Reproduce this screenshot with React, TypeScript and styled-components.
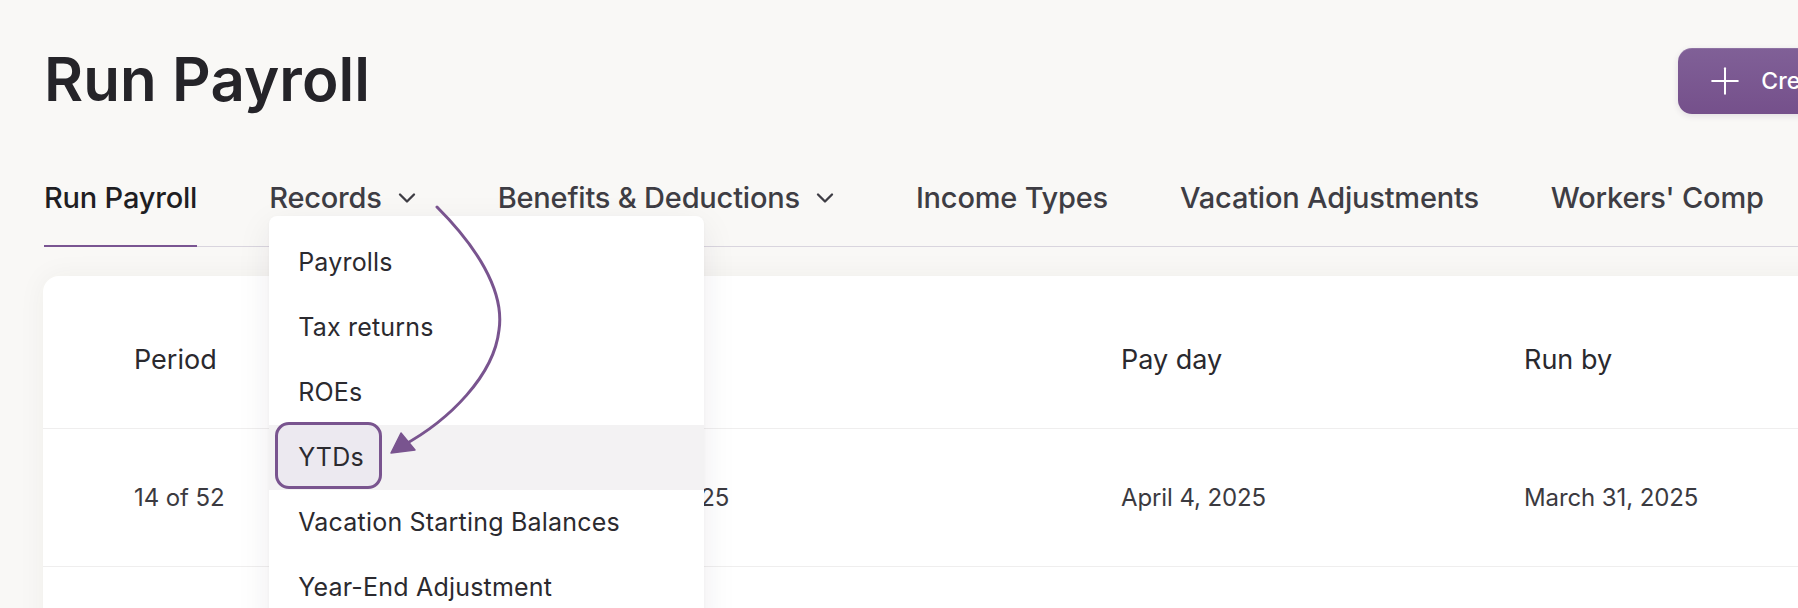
import { createGlobalStyle } from "styled-components";
import styled from "styled-components";
import { ChevronDown, Plus } from "lucide-react";

const GlobalStyle = createGlobalStyle`
  html, body {
    margin: 0;
    padding: 0;
    height: 608px;
    overflow: hidden;
    background: #f9f8f6;
    font-family: Inter, "Noto Sans", sans-serif;
    -webkit-font-smoothing: antialiased;
  }
`;

const Page = styled.div`
  position: relative;
  width: 1798px;
  height: 608px;
  overflow: hidden;
`;

const Inner = styled.div`
  width: 1905px;
  margin-left: 44px;
  padding-top: 48px;
`;

const Header = styled.div`
  display: flex;
  align-items: center;
  justify-content: space-between;
  height: 66px;
`;

const Title = styled.h1`
  margin: 0;
  font-size: 60px;
  line-height: 1;
  font-weight: 600;
  letter-spacing: 0.1px;
  color: #252429;
  transform: translateY(-2px);
`;

const CreateButton = styled.button`
  display: flex;
  align-items: center;
  gap: 14px;
  height: 66px;
  padding: 0 34px 0 25px;
  border: none;
  border-radius: 14px;
  background: linear-gradient(180deg, #806097 0%, #75508b 100%);
  box-shadow: inset 0 1px 0 rgba(255, 255, 255, 0.12), 0 2px 6px rgba(60, 30, 80, 0.12);
  color: #ffffff;
  font-family: Inter, sans-serif;
  font-size: 23px;
  font-weight: 500;
`;

const TabBar = styled.div`
  display: flex;
  gap: 72px;
  margin-top: 67px;
  border-bottom: 1px solid #d9d5de;
`;

const Tab = styled.div<{ $active?: boolean }>`
  position: relative;
  display: flex;
  align-items: flex-start;
  font-size: 29px;
  line-height: 34px;
  font-weight: 500;
  letter-spacing: -0.2px;
  color: ${({ $active }) => ($active ? "#1f1e23" : "#3e3d44")};
  padding-bottom: 30px;
  margin-bottom: -1px;
  border-bottom: 2px solid ${({ $active }) => ($active ? "#7a5592" : "transparent")};
`;

const Caret = styled.span`
  display: flex;
  align-items: center;
  height: 34px;
  margin-left: 11px;
  margin-right: 5px;
  color: #3e3d44;
`;

const Dropdown = styled.div`
  position: absolute;
  top: 35px;
  left: 0;
  z-index: 10;
  width: 435px;
  padding-top: 14px;
  padding-bottom: 12px;
  background: #ffffff;
  border-radius: 8px;
  box-shadow: 0 10px 34px rgba(40, 30, 50, 0.08), 0 1px 3px rgba(40, 30, 50, 0.04);
`;

const MenuItem = styled.div<{ $hover?: boolean }>`
  position: relative;
  height: 65px;
  line-height: 65px;
  padding-left: 29px;
  font-size: 25px;
  font-weight: 400;
  color: #2b2a2f;
  letter-spacing: 0.2px;
  background: ${({ $hover }) => ($hover ? "#f3f2f3" : "transparent")};
`;

const CalloutBox = styled.span`
  position: absolute;
  left: 6px;
  top: -3px;
  width: 107px;
  height: 67px;
  box-sizing: border-box;
  border: 3px solid #79548f;
  border-radius: 14px;
  background: #ece9f0;
`;

const Label = styled.span`
  position: relative;
`;

const Card = styled.div`
  margin-top: 29px;
  margin-left: -1px;
  padding-top: 14px;
  background: #ffffff;
  border-radius: 16px;
  box-shadow: 0 0 28px rgba(60, 50, 40, 0.05);
`;

const Row = styled.div<{ $head?: boolean }>`
  display: grid;
  grid-template-columns: 290px 697px 403px 1fr;
  align-items: center;
  height: ${({ $head }) => ($head ? "138px" : "137px")};
  padding-left: 91px;
  border-top: ${({ $head }) => ($head ? "none" : "1px solid #efeeee")};
  font-size: ${({ $head }) => ($head ? "27px" : "24px")};
  font-weight: 400;
  letter-spacing: ${({ $head }) => ($head ? "0px" : "-0.1px")};
  color: ${({ $head }) => ($head ? "#2a292e" : "#3b3a40")};
`;

const Cell = styled.div`
  white-space: nowrap;
`;

const Overlay = styled.svg`
  position: absolute;
  top: 0;
  left: 0;
  z-index: 20;
  pointer-events: none;
`;

const records = [
  "Payrolls",
  "Tax returns",
  "ROEs",
  "YTDs",
  "Vacation Starting Balances",
  "Year-End Adjustment",
];

const rows = [
  ["14 of 52", "March 17 – March 30, 2025", "April 4, 2025", "March 31, 2025"],
  ["13 of 52", "March 3 – March 16, 2025", "March 21, 2025", "March 17, 2025"],
];

export default function App() {
  return (
    <>
      <GlobalStyle />
      <Page>
        <Inner>
          <Header>
            <Title>Run Payroll</Title>
            <CreateButton>
              <Plus size={44} strokeWidth={1.1} />
              Create payroll
            </CreateButton>
          </Header>

          <TabBar>
            <Tab $active>Run Payroll</Tab>
            <Tab>
              Records
              <Caret>
                <ChevronDown size={28} strokeWidth={2} />
              </Caret>
              <Dropdown>
                {records.map((item) => (
                  <MenuItem key={item} $hover={item === "YTDs"}>
                    {item === "YTDs" && <CalloutBox />}
                    <Label>{item}</Label>
                  </MenuItem>
                ))}
              </Dropdown>
            </Tab>
            <Tab>
              Benefits &amp; Deductions
              <Caret>
                <ChevronDown size={28} strokeWidth={2} />
              </Caret>
            </Tab>
            <Tab>Income Types</Tab>
            <Tab>Vacation Adjustments</Tab>
            <Tab>Workers' Comp</Tab>
          </TabBar>

          <Card>
            <Row $head>
              <Cell>Period</Cell>
              <Cell>Pay period</Cell>
              <Cell>Pay day</Cell>
              <Cell>Run by</Cell>
            </Row>
            {rows.map((r) => (
              <Row key={r[0]}>
                {r.map((c, i) => (
                  <Cell key={i}>{c}</Cell>
                ))}
              </Row>
            ))}
          </Card>
        </Inner>

        <Overlay width="1798" height="608" viewBox="0 0 1798 608">
          <path
            d="M437 207 C 475 245, 505 290, 499 330 C 494 375, 450 420, 402 446"
            fill="none"
            stroke="#79548f"
            strokeWidth="3"
            strokeLinecap="round"
          />
          <polygon
            points="391,453 401,433 415,450"
            fill="#79548f"
            stroke="#79548f"
            strokeWidth="1.5"
            strokeLinejoin="round"
          />
        </Overlay>
      </Page>
    </>
  );
}
